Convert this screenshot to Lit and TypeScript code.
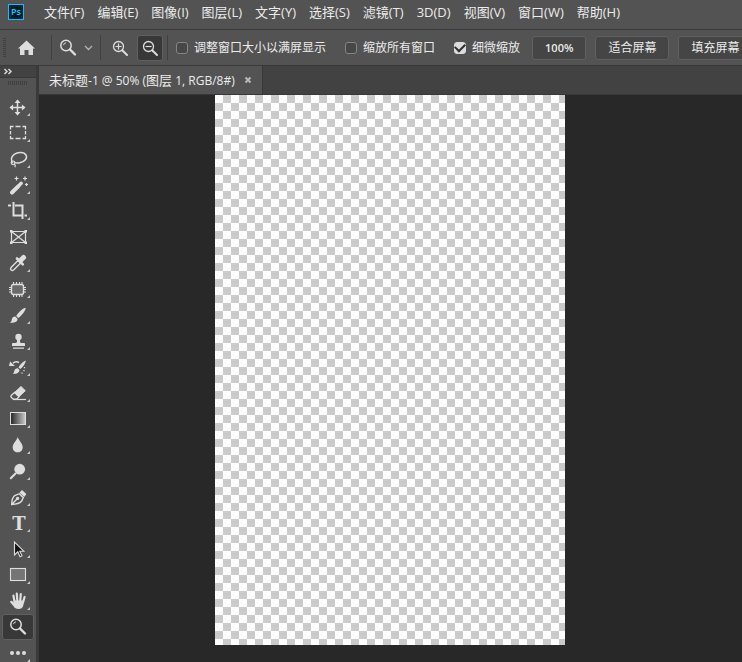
import { LitElement, html, svg, css } from "lit";
import { customElement, property } from "lit/decorators.js";
import { classMap } from "lit/directives/class-map.js";

const magnifier = svg`
  <circle cx="14" cy="10.5" r="5.2" fill="none" stroke="currentColor" stroke-width="1.5"/>
  <path d="M11.5 10.2a2.8 2.8 0 0 1 2.6-2.4" fill="none" stroke="currentColor" stroke-width="1"/>
  <path d="M18 14.5l5 5" stroke="currentColor" stroke-width="2.4" stroke-linecap="round"/>`;

interface Tool {
  name: string;
  icon: unknown;
  plain?: boolean;
  active?: boolean;
}

const TOOLS: Tool[] = [
  {
    name: "移动工具",
    icon: svg`<path d="M8.5 13.5h14M15.5 6.5v14" stroke="currentColor" stroke-width="1.5"/>
      <path d="M15.5 5.5l3 3.6h-6zM15.5 21.5l3-3.6h-6zM7.5 13.5l3.6-3v6zM23.5 13.5l-3.6-3v6z" fill="currentColor"/>`,
  },
  {
    name: "矩形选框工具",
    icon: svg`<path d="M8.500 9.500v-3h3M13.500 6.500h5M20.500 6.500h3v3M23.500 11v3.500M23.500 16v2.500h-3M18.500 18.500h-5M11.500 18.500h-3v-2.500M8.500 14.500v-3.500" fill="none" stroke="currentColor" stroke-width="1.300"/>`,
  },
  {
    name: "套索工具",
    icon: svg`<path d="M11 17c-2.500-2.500-2-6.300 1.200-8.700 3.800-2.600 10-2.300 11.800.7 1.700 3-1.300 7-6.300 7.800-2.500.4-4 .2-5.200-.4" fill="none" stroke="currentColor" stroke-width="1.500"/>
      <circle cx="11" cy="16.800" r="1.800" fill="none" stroke="currentColor" stroke-width="1.200"/>
      <path d="M12 18.300c1.500.3 1.500 1.700.8 3" fill="none" stroke="currentColor" stroke-width="1.200"/>`,
  },
  {
    name: "魔棒工具",
    icon: svg`<path d="M10 20.500l6.200-6.200" stroke="currentColor" stroke-width="4" stroke-linecap="round"/>
      <path d="M16.900 13.600l2.300-2.300" stroke="currentColor" stroke-width="3.400" stroke-linecap="round"/>
      <path d="M14.500 4.500v4M12.500 6.500h4M23 4.500v4M21 6.500h4M24.500 11v3M23 12.500h3" stroke="currentColor" stroke-width="1.200"/>`,
  },
  {
    name: "裁剪工具",
    icon: svg`<path d="M6 7.500h3M11.500 4v13.500h8.500M22.500 17.500h2.500M13 7.500h7.500v13.500" fill="none" stroke="currentColor" stroke-width="2"/>`,
  },
  {
    name: "图框工具",
    plain: true,
    icon: svg`<path d="M9.500 7.500h14v11h-14zM9.500 7.500l14 11M23.500 7.500l-14 11" fill="none" stroke="currentColor" stroke-width="1.200"/>
      <path d="M8 6h2.500v2.500h-2.500zM22.500 6h2.500v2.500h-2.500zM8 17.500h2.500v2.500h-2.500zM22.500 17.500h2.500v2.500h-2.500z" fill="currentColor"/>`,
  },
  {
    name: "吸管工具",
    icon: svg`<path d="M16 10.500l-6.700 6.700c-.7.900-.8 2.200-.2 2.800s2 .5 2.800-.2l6.700-6.700" fill="none" stroke="currentColor" stroke-width="1.400"/>
      <path d="M15 8.500l5.800 5.800" stroke="currentColor" stroke-width="2.600" stroke-linecap="round"/>
      <path d="M18.500 10.500l3-3" stroke="currentColor" stroke-width="5" stroke-linecap="round"/>`,
  },
  {
    name: "修补工具",
    icon: svg`<rect x="9.500" y="8.500" width="12" height="10" rx="2" fill="#6a6a6a" stroke="currentColor" stroke-width="1.400"/>
      <path d="M11.500 6v2.500M14.500 6v2.500M17.500 6v2.500M20 6v2.500M11.500 18.500v2.500M14.500 18.500v2.500M17.500 18.500v2.500M20 18.500v2.500M7 11.500h2.500M7 13.500h2.500M7 16h2.500M21.500 11.500h2.500M21.500 13.500h2.500M21.500 16h2.500" stroke="currentColor" stroke-width="1.100"/>`,
  },
  {
    name: "画笔工具",
    icon: svg`<path d="M23.200 5.800c-3 1-7.700 5.500-9 8.300l2 2c2.800-1.800 6.700-6.700 7.500-9.400z" fill="currentColor"/>
      <path d="M13.300 14.600l2.200 2.200c.4 2.700-2.500 4.400-7.800 3.900 1.700-.7 1.900-1.800 2.200-3.400.4-1.900 1.700-2.900 3.400-2.700z" fill="currentColor"/>`,
  },
  {
    name: "仿制图章工具",
    icon: svg`<circle cx="16.500" cy="9" r="3.200" fill="currentColor"/>
      <path d="M15 11h3v3c.3.800 1 1 2 1h2.200c.6 0 .8.400.8.900v2.100h-13v-2.100c0-.5.300-.9.800-.9h2.200c1 0 1.700-.2 2-1zM11 19.500h11v1.300h-11z" fill="currentColor"/>`,
  },
  {
    name: "历史记录画笔工具",
    icon: svg`<path d="M24 6.500c-3 1-6 4-7.500 7l1.700 1.500c2.500-1.500 5-5 5.800-8.500zM15.800 14.200l1.700 1.700c0 2.600-2.300 4.200-7 3.900 1.500-.7 1.400-1.500 1.800-3 .4-1.700 1.800-2.700 3.500-2.600z" fill="currentColor"/>
      <path d="M17 8.500c-2-1-4.500-.8-6 .8" fill="none" stroke="currentColor" stroke-width="1.600"/>
      <path d="M7 12l1-4.500 5 4.500z" fill="currentColor"/>
      <path d="M22.500 13v1.200M22 16v1.200M20 18.500v1.200" stroke="currentColor" stroke-width="1.200"/>`,
  },
  {
    name: "橡皮擦工具",
    icon: svg`<path d="M19 6.500l4.300 4.200-6.300 6-4.400-4.200z" fill="currentColor" stroke="currentColor" stroke-linejoin="round"/>
      <path d="M12.500 12.500l-3.300 3c-.5.600-.5 1.200 0 1.700l2 2h3.500l2.300-2.400z" fill="none" stroke="currentColor" stroke-width="1.300"/>
      <path d="M11 19.500h13" stroke="currentColor" stroke-width="1.200"/>`,
  },
  {
    name: "渐变工具",
    icon: svg`<defs><linearGradient id="ramp"><stop offset="0" stop-color="#222"/><stop offset="1" stop-color="#ccc"/></linearGradient></defs>
      <rect x="8.500" y="6.500" width="15" height="12" fill="url(#ramp)" stroke="currentColor"/>`,
  },
  {
    name: "模糊工具",
    icon: svg`<path d="M15.700 5c1 3.500 5 6.500 5 10.200 0 3-2 5-5 5s-5-2-5-5c0-3.700 4.200-6.700 5-10.200z" fill="currentColor"/>`,
  },
  {
    name: "减淡工具",
    icon: svg`<circle cx="17.700" cy="11.200" r="5.400" fill="currentColor"/>
      <path d="M13.500 15.500l-4.700 4.700" stroke="currentColor" stroke-width="2" stroke-linecap="round"/>`,
  },
  {
    name: "钢笔工具",
    icon: svg`<path d="M9.700 20.500c0-4 .7-7 3-9l4.600-1.800 4 4-1.800 3.600c-2 2.200-5 3-9.800 3.200zM9.700 20.500l5.500-5.700" fill="none" stroke="currentColor" stroke-width="1.400"/>
      <circle cx="15.600" cy="14.400" r="1.600" fill="currentColor"/>
      <path d="M17.500 8.500l2.500-2.500 4.400 4-2.200 3z" fill="currentColor"/>`,
  },
  {
    name: "横排文字工具",
    icon: svg`<text x="17" y="20" text-anchor="middle" class="type">T</text>`,
  },
  {
    name: "路径选择工具",
    icon: svg`<path d="M12.500 6v13l3.300-3.200 2.200 5 2-1-2.200-4.600h4z" fill="#111" stroke="currentColor" stroke-width="1.100"/>`,
  },
  {
    name: "矩形工具",
    icon: svg`<rect x="8.500" y="6.500" width="15" height="12" fill="#757575" stroke="currentColor" stroke-width="1.100"/>`,
  },
  {
    name: "抓手工具",
    icon: svg`<path d="M12.600 14l-1.200-6.500M15.300 13l-.5-7.500M18.200 13l.6-7M21 14.500l1.600-5.500" stroke="currentColor" stroke-width="2.200" stroke-linecap="round"/>
      <path d="M11.600 12.500h10.600l-.8 4.500c-.6 2.600-1.900 4-4.900 4-2.600 0-3.700-.8-5.100-3l-3.200-3.800c-.5-1 .7-2 1.900-1.200l2.100 1.800z" fill="currentColor"/>`,
  },
  { name: "缩放工具", plain: true, active: true, icon: magnifier },
  {
    name: "编辑工具栏",
    icon: svg`<circle cx="10" cy="13" r="2" fill="currentColor"/><circle cx="16" cy="13" r="2" fill="currentColor"/><circle cx="22" cy="13" r="2" fill="currentColor"/>`,
  },
];

const MENUS = ["文件(F)", "编辑(E)", "图像(I)", "图层(L)", "文字(Y)", "选择(S)", "滤镜(T)", "3D(D)", "视图(V)", "窗口(W)", "帮助(H)"];

const base = css`
  :host,
  * {
    box-sizing: border-box;
  }
  button {
    margin: 0;
    padding: 0;
    border: 0;
    background: none;
    color: inherit;
    font: inherit;
    white-space: nowrap;
  }
  svg {
    display: block;
    flex: none;
  }
`;

@customElement("menu-bar")
export class MenuBar extends LitElement {
  static styles = [
    base,
    css`
      :host {
        display: flex;
        align-items: center;
        height: 30px;
        padding: 0 8px 5px;
        border-bottom: 1px solid #383838;
        overflow: hidden;
      }
      .logo {
        flex: none;
        width: 16px;
        height: 16px;
        margin-right: 20px;
        border: 1px solid #00c8ff;
        background: #001d2a;
        color: #20c5fa;
        font: 600 9px/14px "Open Sans", sans-serif;
        text-align: center;
      }
      .menus {
        display: flex;
        gap: 13px;
        font-size: 13px;
        line-height: 20px;
      }
    `,
  ];

  render() {
    return html`<div class="logo">Ps</div>
      <nav class="menus">${MENUS.map((m) => html`<button>${m}</button>`)}</nav>`;
  }
}

@customElement("options-bar")
export class OptionsBar extends LitElement {
  static styles = [
    base,
    css`
      :host {
        display: flex;
        align-items: center;
        height: 36px;
        padding-left: 3px;
        border-bottom: 1px solid #383838;
        overflow: hidden;
        font-size: 12px;
        line-height: 16px;
      }
      .grip,
      .rule,
      .mode,
      .actions {
        flex: none;
      }
      .grip {
        width: 3px;
        height: 20px;
        background: repeating-linear-gradient(#404040 0 1px, transparent 1px 2px);
      }
      .home {
        margin: 0 16px 0 12px;
      }
      .rule {
        width: 1px;
        height: 25px;
        background: #404040;
      }
      .picker {
        display: flex;
        align-items: center;
        gap: 6px;
        margin: 0 7px 0 6px;
      }
      .mode {
        width: 26px;
        height: 26px;
        border: 1px solid transparent;
        border-radius: 3px;
      }
      .first {
        margin: 0 4px 0 6px;
      }
      .on {
        border-color: #606060;
        background: #383838;
      }
      .last {
        margin: 0 8px 0 4px;
      }
      label {
        display: flex;
        flex: none;
        align-items: center;
        gap: 6px;
        margin-right: 19px;
        white-space: nowrap;
      }
      input {
        appearance: none;
        display: grid;
        place-items: center;
        width: 12px;
        height: 12px;
        margin: 0;
        border: 1px solid #858585;
        border-radius: 3px;
        background: #474747;
      }
      input:checked {
        border-color: #dcdcdc;
        background: #dcdcdc;
      }
      input:checked::before {
        content: "";
        width: 8px;
        height: 5px;
        margin-bottom: 2px;
        border: solid #303030;
        border-width: 0 0 2px 2px;
        transform: rotate(-45deg);
      }
      .actions {
        display: flex;
        gap: 9px;
        margin-left: -7px;
      }
      .actions button {
        height: 24px;
        padding: 0 12px;
        border: 1px solid #606060;
        border-radius: 3px;
        background: #454545;
      }
      .actions .percent {
        font-size: 11px;
        font-weight: 600;
      }
    `,
  ];

  render() {
    const lens = (sign: string) => svg`
      <circle cx="10.500" cy="10.500" r="5" fill="none" stroke="#dedede" stroke-width="1.300"/>
      <path d="${sign}" stroke="#dedede" stroke-width="1.200"/>
      <path d="M14.500 14.500l4.500 4.500" stroke="#dedede" stroke-width="2" stroke-linecap="round"/>`;
    return html`
      <div class="grip"></div>
      <button class="home" aria-label="主页">
        <svg width="17" height="16" viewBox="0 0 17 16"><path d="M8.500 .5l8.500 8h-2v6.500h-4.500v-5h-4v5h-4.500v-6.500h-2z" fill="#dedede"/></svg>
      </button>
      <div class="rule"></div>
      <button class="picker" aria-label="缩放工具">
        <svg width="20" height="20" viewBox="6 3 20 20" color="#dedede">${magnifier}</svg>
        <svg width="9" height="6" viewBox="0 0 9 6"><path d="M1 1l3.500 3.500 3.500-3.500" fill="none" stroke="#b4b4b4" stroke-width="1.300"/></svg>
      </button>
      <div class="rule"></div>
      <button class="mode first" aria-label="放大">
        <svg width="24" height="24">${lens("M7.500 10.500h6M10.500 7.500v6")}</svg>
      </button>
      <button class="mode on" aria-label="缩小">
        <svg width="24" height="24">${lens("M7.500 10.500h6")}</svg>
      </button>
      <div class="rule last"></div>
      <label><input type="checkbox" />调整窗口大小以满屏显示</label>
      <label><input type="checkbox" />缩放所有窗口</label>
      <label><input type="checkbox" checked />细微缩放</label>
      <div class="actions">
        <button class="percent">100%</button>
        <button>适合屏幕</button>
        <button>填充屏幕</button>
      </div>`;
  }
}

@customElement("tool-rail")
export class ToolRail extends LitElement {
  @property({ attribute: false }) tools: Tool[] = TOOLS;

  static styles = [
    base,
    css`
      :host {
        display: flex;
        flex-direction: column;
        flex: none;
        width: 39px;
        border-right: 3px solid #3a3a3a;
        overflow: hidden;
      }
      .collapse {
        flex: none;
        height: 12px;
        padding-left: 4px;
        border-bottom: 1px solid #383838;
        background: #424242;
      }
      .grip {
        flex: none;
        width: 20px;
        height: 4px;
        margin: 3px 8px 9px;
        background: repeating-linear-gradient(90deg, #404040 0 1px, transparent 1px 2px);
      }
      .tool {
        flex: none;
        width: 32px;
        height: 26px;
        margin-left: 2px;
        border-radius: 3px;
        color: #dedede;
      }
      .active {
        background: #383838;
        box-shadow: inset 0 0 0 1px #606060;
      }
      .type {
        font: bold 18px "DejaVu Serif", serif;
        fill: currentColor;
      }
    `,
  ];

  render() {
    return html`
      <button class="collapse" aria-label="折叠面板">
        <svg width="8" height="7" viewBox="0 0 8 7"><path d="M.5 1l2.500 2.500-2.500 2.500M4.500 1l2.500 2.500-2.500 2.500" fill="none" stroke="#dedede" stroke-width="1.400"/></svg>
      </button>
      <div class="grip"></div>
      ${this.tools.map(
        (t) => html`<button class=${classMap({ tool: true, active: !!t.active })} aria-label=${t.name}>
          <svg width="32" height="26" viewBox="0 0 32 26">
            ${t.icon}${t.plain ? "" : svg`<path d="M28 19v3h-3z" fill="#c8c8c8"/>`}
          </svg>
        </button>`
      )}`;
  }
}

@customElement("document-view")
export class DocumentView extends LitElement {
  static styles = [
    base,
    css`
      :host {
        display: flex;
        flex-direction: column;
        flex: 1;
        min-width: 0;
        background: #282828;
      }
      .tabs {
        display: flex;
        height: 29px;
        border-bottom: 1px solid #383838;
        background: #424242;
      }
      .tab {
        display: flex;
        align-items: center;
        gap: 9px;
        padding: 0 10px;
        border-right: 1px solid #383838;
        background: #535353;
        font-size: 13px;
        line-height: 20px;
        white-space: nowrap;
      }
      .tab small {
        font-size: 12px;
      }
      .stage {
        display: flex;
        justify-content: center;
        padding-right: 1px;
      }
      .artboard {
        width: 350px;
        aspect-ratio: 7 / 11;
        background: repeating-conic-gradient(#fff 0 25%, #cbcbcb 0 50%) 8px 0 / 16px 16px;
      }
    `,
  ];

  render() {
    return html`
      <div class="tabs">
        <div class="tab">
          <span>未标题<small>-1 @ 50% (</small>图层<small> 1, RGB/8#)</small></span>
          <button aria-label="关闭">
            <svg width="8" height="8" viewBox="0 0 8 8"><path d="M1.500 1.500l5 5M6.500 1.500l-5 5" stroke="#b8b8b8" stroke-width="2"/></svg>
          </button>
        </div>
      </div>
      <div class="stage"><div class="artboard"></div></div>`;
  }
}

@customElement("app-root")
export class AppRoot extends LitElement {
  static styles = css`
    :host {
      display: flex;
      flex-direction: column;
      height: 100vh;
      overflow: hidden;
      background: #535353;
      color: #ececec;
      font-family: "Open Sans", "Noto Sans CJK SC", sans-serif;
    }
    .workspace {
      display: flex;
      flex: 1;
      min-height: 0;
    }
  `;

  render() {
    return html`
      <menu-bar></menu-bar>
      <options-bar></options-bar>
      <div class="workspace">
        <tool-rail></tool-rail>
        <document-view></document-view>
      </div>`;
  }
}
